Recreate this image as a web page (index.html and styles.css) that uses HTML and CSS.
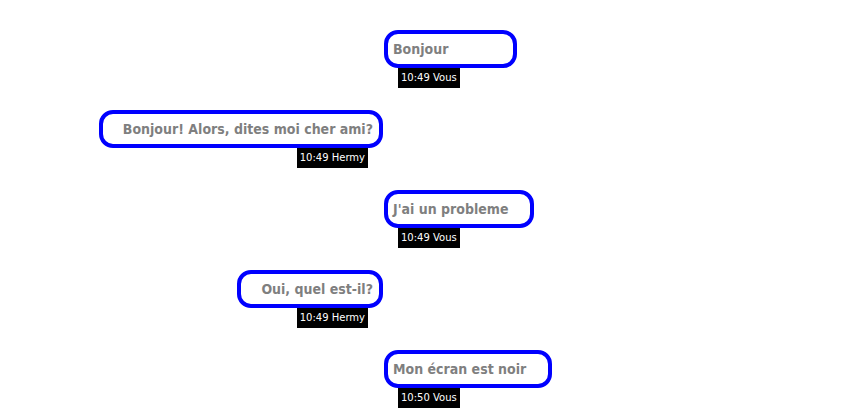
FILE: index.html
```html
<!DOCTYPE html>
<html lang="fr">
<head>
    <meta charset="UTF-8">
    <meta name="viewport" content="width=device-width, initial-scale=1.0">
    <title>Chat</title>
    <link rel="stylesheet" href="styles.css">
</head>
<body>
    <div class="chat">
        <div class="message vous">
            <div class="bubble">Bonjour</div>
            <div class="meta">10:49 Vous</div>
        </div>
        <div class="message hermy">
            <div class="bubble">Bonjour! Alors, dites moi cher ami?</div>
            <div class="meta">10:49 Hermy</div>
        </div>
        <div class="message vous">
            <div class="bubble">J'ai un probleme</div>
            <div class="meta">10:49 Vous</div>
        </div>
        <div class="message hermy">
            <div class="bubble">Oui, quel est-il?</div>
            <div class="meta">10:49 Hermy</div>
        </div>
        <div class="message vous">
            <div class="bubble">Mon écran est noir</div>
            <div class="meta">10:50 Vous</div>
        </div>
    </div>
</body>
</html>
```

FILE: styles.css
```css
body {
    margin: 0;
    background-color: #ffffff;
    font-family: "DejaVu Sans", sans-serif;
}
.chat {
    display: flex;
    flex-direction: column;
    gap: 22px;
    padding-top: 30px;
}
.message {
    display: flex;
    flex-direction: column;
}
.message.vous {
    margin-left: 384px;
    align-items: flex-start;
}
.message.hermy {
    width: 383px;
    align-items: flex-end;
}
.bubble {
    box-sizing: border-box;
    min-width: 133px;
    border: 4px solid #0000ff;
    border-radius: 14px;
    font-family: "DejaVu Sans Condensed", "DejaVu Sans", sans-serif;
    font-stretch: condensed;
    font-weight: bold;
    font-size: 14px;
    line-height: 16px;
    color: #7f7f7f;
    white-space: nowrap;
}
.vous .bubble {
    padding: 7px 22px 7px 5px;
}
.hermy .bubble {
    padding: 7px 6px 7px 20px;
}
.meta {
    background-color: #000000;
    color: #ffffff;
    font-size: 10px;
    line-height: 14px;
    padding: 3px 3px;
}
.vous .meta {
    margin-left: 14px;
}
.hermy .meta {
    margin-right: 15px;
}
```
